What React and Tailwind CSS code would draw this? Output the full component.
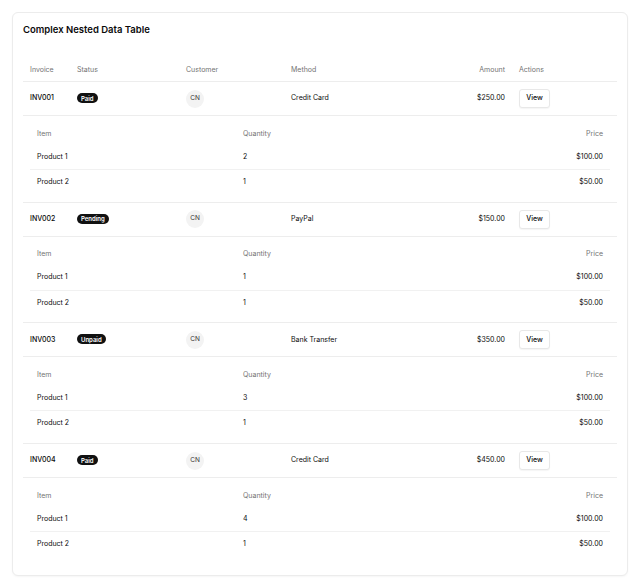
import React from "react";

const invoices = [
  { id: "INV001", status: "Paid", method: "Credit Card", amount: "$250.00", items: [["Product 1", "2", "$100.00"], ["Product 2", "1", "$50.00"]] },
  { id: "INV002", status: "Pending", method: "PayPal", amount: "$150.00", items: [["Product 1", "1", "$100.00"], ["Product 2", "1", "$50.00"]] },
  { id: "INV003", status: "Unpaid", method: "Bank Transfer", amount: "$350.00", items: [["Product 1", "3", "$100.00"], ["Product 2", "1", "$50.00"]] },
  { id: "INV004", status: "Paid", method: "Credit Card", amount: "$450.00", items: [["Product 1", "4", "$100.00"], ["Product 2", "1", "$50.00"]] },
];

const cols = "grid grid-cols-[47px_109px_105px_1fr_90px_105px] items-center";

export default function App() {
  return (
    <div className="min-h-[585px] bg-white pt-[12px] px-[12px]" style={{ fontFamily: "Inter, 'Liberation Sans', sans-serif" }}>
      <div className="w-[616px] rounded-[6px] border border-[#ececec] bg-white shadow-[0_1px_2px_rgba(0,0,0,0.04)] px-[10px] pt-[11px] pb-[11px]">
        <h2 className="text-[9.5px] leading-[12px] font-semibold text-[#0a0a0a] mb-[24px]">Complex Nested Data Table</h2>
        <div className="w-full text-[7px] text-[#0a0a0a]">
          <div className={`${cols} h-[22px] border-b border-[#ededed] text-[#737373]`}>
            <div className="px-[7px]">Invoice</div>
            <div className="px-[7px]">Status</div>
            <div className="px-[7px]">Customer</div>
            <div className="px-[7px]">Method</div>
            <div className="px-[7px] text-right">Amount</div>
            <div className="px-[7px]">Actions</div>
          </div>
          {invoices.map((inv, i) => (
            <div key={inv.id}>
              <div className={`${cols} h-[34px] border-b border-[#ededed]`}>
                <div className="px-[7px] font-medium">{inv.id}</div>
                <div className="px-[7px]">
                  <span className="inline-flex items-center h-[10px] rounded-full bg-[#111] text-white text-[6px] font-semibold px-[4px]">{inv.status}</span>
                </div>
                <div className="px-[7px]">
                  <span className="flex items-center justify-center w-[18px] h-[18px] rounded-full bg-[#f3f3f3] text-[6.5px] text-[#333]">CN</span>
                </div>
                <div className="px-[7px]">{inv.method}</div>
                <div className="px-[7px] text-right">{inv.amount}</div>
                <div className="px-[7px]">
                  <button className="flex items-center justify-center w-[31px] h-[19px] rounded-[3px] border border-[#e8e8e8] bg-white shadow-[0_1px_1px_rgba(0,0,0,0.04)] text-[7px] font-medium">View</button>
                </div>
              </div>
              <div className={`px-[7px] py-[7px] ${i < invoices.length - 1 ? "border-b border-[#ededed]" : ""}`}>
                <div className="grid grid-cols-[206px_1fr_1fr] items-center h-[22px] text-[#737373]">
                  <div className="px-[7px]">Item</div>
                  <div className="px-[7px]">Quantity</div>
                  <div className="px-[7px] text-right">Price</div>
                </div>
                {inv.items.map((it, j) => (
                  <div key={j} className={`grid grid-cols-[206px_1fr_1fr] items-center h-[24.85px] ${j === 0 ? "border-b border-[#f1f1f1]" : ""}`}>
                    <div className="px-[7px]">{it[0]}</div>
                    <div className="px-[7px]">{it[1]}</div>
                    <div className="px-[7px] text-right">{it[2]}</div>
                  </div>
                ))}
              </div>
            </div>
          ))}
        </div>
      </div>
    </div>
  );
}
